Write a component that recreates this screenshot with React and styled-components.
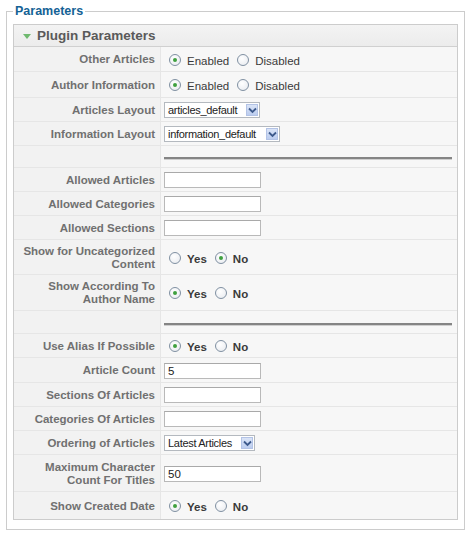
import React from "react"
import styled, { createGlobalStyle } from "styled-components"

const GlobalStyle = createGlobalStyle`
  html, body {
    margin: 0;
    padding: 0;
    background: #ffffff;
  }
  body {
    font-family: "Liberation Sans", Arial, sans-serif;
    font-size: 11.5px;
    color: #333;
  }
`

const rows = [
  { label: "Other Articles", type: "radio", options: ["Enabled", "Disabled"], value: 0, h: 25 },
  { label: "Author Information", type: "radio", options: ["Enabled", "Disabled"], value: 0, h: 26 },
  { label: "Articles Layout", type: "select", value: "articles_default", width: 96, h: 24 },
  { label: "Information Layout", type: "select", value: "information_default", width: 116, h: 24 },
  { type: "spacer", h: 22 },
  { label: "Allowed Articles", type: "text", value: "", h: 24 },
  { label: "Allowed Categories", type: "text", value: "", h: 24 },
  { label: "Allowed Sections", type: "text", value: "", h: 24 },
  { label: ["Show for Uncategorized", "Content"], type: "radio", bold: true, options: ["Yes", "No"], value: 1, h: 35 },
  { label: ["Show According To", "Author Name"], type: "radio", bold: true, options: ["Yes", "No"], value: 0, h: 36 },
  { type: "spacer", h: 23 },
  { label: "Use Alias If Possible", type: "radio", bold: true, options: ["Yes", "No"], value: 0, h: 24 },
  { label: "Article Count", type: "text", value: "5", h: 25 },
  { label: "Sections Of Articles", type: "text", value: "", h: 24 },
  { label: "Categories Of Articles", type: "text", value: "", h: 24 },
  { label: "Ordering of Articles", type: "select", value: "Latest Articles", width: 91, h: 24 },
  { label: ["Maximum Character", "Count For Titles"], type: "text", value: "50", h: 37 },
  { label: "Show Created Date", type: "radio", bold: true, options: ["Yes", "No"], value: 0, h: 27, last: true },
]

export default function App() {
  return (
    <>
      <GlobalStyle />
      <Fieldset>
        <Legend>Parameters</Legend>
        <Panel>
          <PanelTitle>
            <Toggler />
            Plugin Parameters
          </PanelTitle>
          <ParamList>
            {rows.map((row, i) => (
              <ParamRow key={i} $h={row.h} $last={row.last}>
                <ParamKey>
                  {Array.isArray(row.label)
                    ? row.label.map((l) => <div key={l}>{l}</div>)
                    : row.label}
                </ParamKey>
                <ParamValue>{renderValue(row)}</ParamValue>
              </ParamRow>
            ))}
          </ParamList>
        </Panel>
      </Fieldset>
    </>
  )
}

function renderValue(row) {
  if (row.type === "spacer") return <Rule />
  if (row.type === "text") return <TextInput defaultValue={row.value} />
  if (row.type === "select")
    return (
      <Select $w={row.width}>
        <SelectText>{row.value}</SelectText>
        <SelectArrow>
          <svg width="9" height="7" viewBox="0 0 9 7">
            <path d="M1 1.5 L4.5 5 L8 1.5" fill="none" stroke="#3d5a8c" strokeWidth="1.8" />
          </svg>
        </SelectArrow>
      </Select>
    )
  return (
    <RadioGroup>
      {row.options.map((opt, j) => (
        <RadioLabel key={opt} $bold={row.bold}>
          <Radio $checked={row.value === j} />
          {opt}
        </RadioLabel>
      ))}
    </RadioGroup>
  )
}

const Fieldset = styled.fieldset`
  margin: 4px 6px 0 6px;
  padding: 6px 6px 9px 6px;
  border: 1px solid #cccccc;
  min-width: 0;
`

const Legend = styled.legend`
  padding: 0 2px;
  color: #146295;
  font-weight: bold;
  font-size: 12.5px;
  line-height: 14px;
`

const Panel = styled.div`
  border: 1px solid #cccccc;
  background: #f7f7f7;
`

const PanelTitle = styled.div`
  display: flex;
  align-items: center;
  height: 21px;
  padding-left: 9px;
  gap: 6px;
  background: linear-gradient(#f3f3f3, #ececec);
  border-bottom: 1px solid #d0d0d0;
  color: #5a5a5a;
  font-weight: bold;
  font-size: 13.5px;
`

const Toggler = styled.span`
  width: 0;
  height: 0;
  border-left: 4px solid transparent;
  border-right: 4px solid transparent;
  border-top: 5px solid #6fb96f;
  margin-top: 1px;
`

const ParamList = styled.div`
  display: flex;
  flex-direction: column;
`

const ParamRow = styled.div`
  display: grid;
  grid-template-columns: 147px 1fr;
  height: ${(p) => p.$h}px;
  box-sizing: border-box;
  border-bottom: ${(p) => (p.$last ? "none" : "1px solid #e6e6e6")};
`

const ParamKey = styled.div`
  display: flex;
  flex-direction: column;
  justify-content: center;
  align-items: flex-end;
  text-align: right;
  padding: 1px 5px 0 0;
  background: #f2f2f2;
  border-right: 1px solid #e6e6e6;
  color: #707070;
  font-weight: bold;
  line-height: 13px;
`

const ParamValue = styled.div`
  display: flex;
  align-items: center;
  padding: 1px 5px 0 3px;
  background: #f7f7f7;
`

const Rule = styled.div`
  flex: 1;
  height: 2px;
  background: #858585;
  border-bottom: 1px solid #cfcfcf;
  margin-top: 3px;
`

const TextInput = styled.input`
  width: 97px;
  height: 16px;
  box-sizing: border-box;
  border: 1px solid #b9b9b9;
  border-top-color: #a9a9a9;
  background: #fff;
  padding: 0 3px;
  margin: 0;
  font-family: inherit;
  font-size: 11.5px;
  color: #222;
  outline: none;
`

const Select = styled.div`
  display: flex;
  align-items: center;
  justify-content: space-between;
  width: ${(p) => p.$w}px;
  height: 16px;
  box-sizing: border-box;
  border: 1px solid #b4b9bf;
  background: #fff;
  padding: 0 1px 0 3px;
`

const SelectText = styled.span`
  font-size: 11px;
  color: #222;
  letter-spacing: -0.3px;
  white-space: nowrap;
`

const SelectArrow = styled.span`
  display: flex;
  align-items: center;
  justify-content: center;
  width: 12px;
  height: 12px;
  background: linear-gradient(#dae4f7, #bccdef);
  border: 1px solid #b3c3e6;
  box-sizing: border-box;
`

const RadioGroup = styled.div`
  display: flex;
  align-items: center;
  gap: 8px;
  padding-left: 5px;
`

const RadioLabel = styled.label`
  display: flex;
  align-items: center;
  gap: 6px;
  font-weight: ${(p) => (p.$bold ? "bold" : "normal")};
  color: #3a3a3a;
  padding-top: 2px;
`

const Radio = styled.span`
  position: relative;
  width: 12px;
  height: 12px;
  box-sizing: border-box;
  border-radius: 50%;
  border: 1px solid #8090a2;
  background: radial-gradient(circle at 40% 35%, #ffffff, #e6e9ee);
  margin-top: -2px;

  &::after {
    content: "";
    display: ${(p) => (p.$checked ? "block" : "none")};
    position: absolute;
    left: 3px;
    top: 3px;
    width: 4px;
    height: 4px;
    border-radius: 50%;
    background: #3fa03f;
  }
`
